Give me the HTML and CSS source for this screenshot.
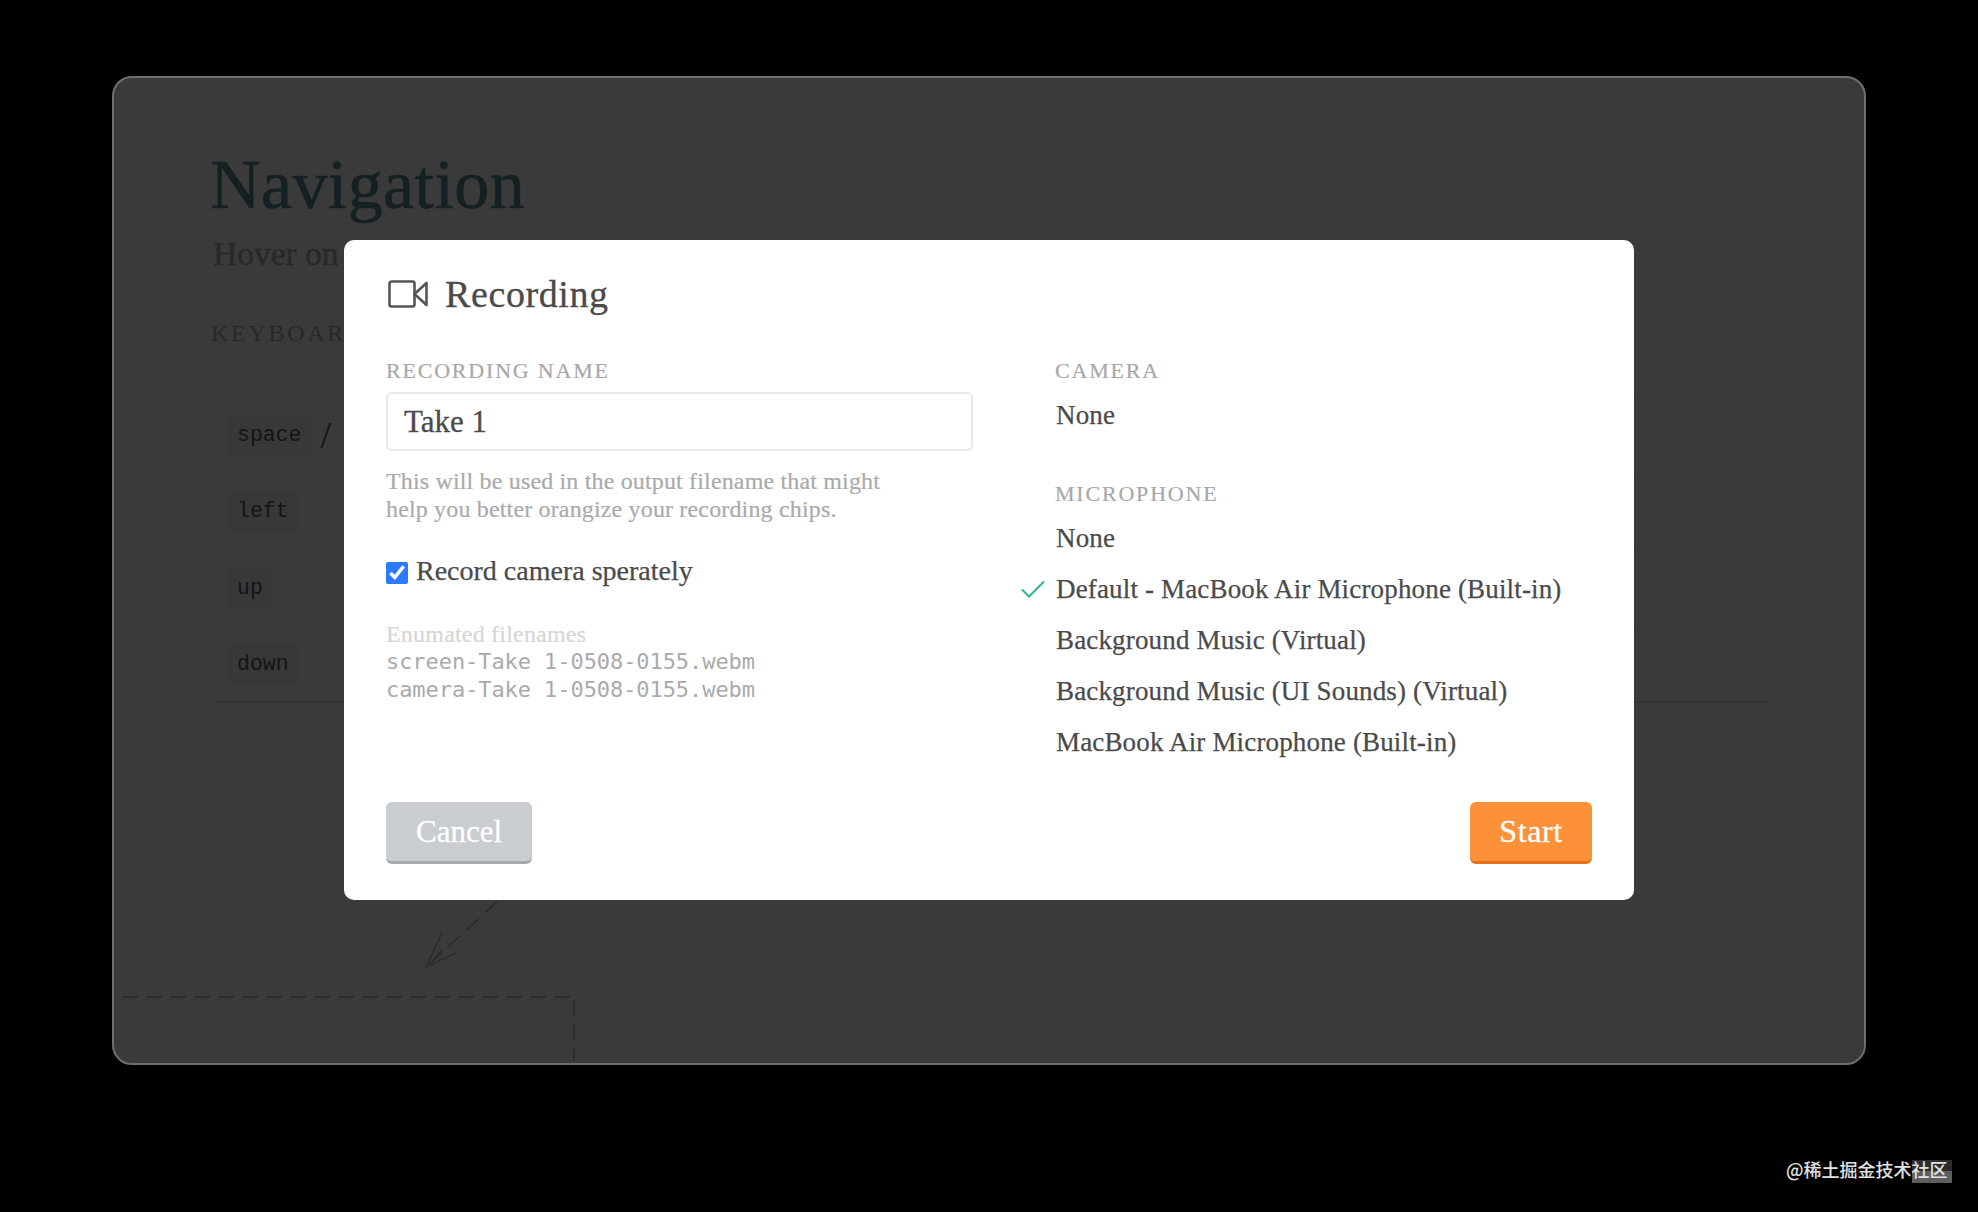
FILE: index.html
```html
<!DOCTYPE html>
<html lang="en">
<head>
<meta charset="utf-8">
<title>Recording</title>
<link rel="stylesheet" href="styles.css">
</head>
<body>
<main class="stage">
  <section class="slide">
    <h1 class="slide-title">Navigation</h1>
    <p class="slide-sub">Hover on the</p>
    <h2 class="slide-label">KEYBOARD SHORTCUTS</h2>
    <div class="shortcuts">
      <div class="shortcut"><kbd class="key">space</kbd><span class="slash">/</span></div>
      <div class="shortcut"><kbd class="key">left</kbd></div>
      <div class="shortcut"><kbd class="key">up</kbd></div>
      <div class="shortcut"><kbd class="key">down</kbd></div>
    </div>
    <svg class="sketch" width="1754" height="989" viewBox="0 0 1754 989" fill="none" aria-hidden="true">
      <path class="dash" d="M10 921H462V985"/>
      <path class="dash-arrow" d="M385 826L314 891"/>
      <path class="arrow-head" d="M330 857L314 891L344 877"/>
      <path class="arrow-head" d="M324 881L330 874"/>
    </svg>
    <div class="modal">
      <header class="modal-head">
        <svg class="cam-icon" width="40" height="28" viewBox="0 0 40 28" fill="none">
          <path d="M3.500 1.500H24.500A2 2 0 0 1 26.500 3.500V24.500A2 2 0 0 1 24.500 26.500H3.500A2 2 0 0 1 1.500 24.500V3.500A2 2 0 0 1 3.500 1.500Z"/>
          <path d="M26.500 14L38.500 3V25Z"/>
        </svg>
        <h2 class="modal-title">Recording</h2>
      </header>
      <div class="modal-cols">
        <div class="col-left">
          <div class="label">RECORDING NAME</div>
          <div class="name-input">Take 1</div>
          <p class="hint">This will be used in the output filename that might<br>help you better orangize your recording chips.</p>
          <label class="check-row"><input class="check" type="checkbox" checked><span>Record camera sperately</span></label>
          <div class="enum-title">Enumated filenames</div>
          <div class="enum-file">screen-Take 1-0508-0155.webm</div>
          <div class="enum-file">camera-Take 1-0508-0155.webm</div>
        </div>
        <div class="col-right">
          <div class="label">CAMERA</div>
          <ul class="options">
            <li class="option">None</li>
          </ul>
          <div class="label label-next">MICROPHONE</div>
          <ul class="options">
            <li class="option">None</li>
            <li class="option option-on">
              <svg class="tick" width="24" height="18" viewBox="0 0 24 18" fill="none"><path d="M1 9.500L8 16.500L23 1.500"/></svg>
              Default - MacBook Air Microphone (Built-in)
            </li>
            <li class="option">Background Music (Virtual)</li>
            <li class="option">Background Music (UI Sounds) (Virtual)</li>
            <li class="option">MacBook Air Microphone (Built-in)</li>
          </ul>
        </div>
      </div>
      <footer class="modal-foot">
        <button class="btn btn-cancel" type="button">Cancel</button>
        <button class="btn btn-start" type="button">Start</button>
      </footer>
    </div>
  </section>
  <div class="watermark"><span class="smudge"></span><span class="mark-text">@稀土掘金技术社区</span></div>
</main>
</body>
</html>
```
FILE: styles.css
```css
* { box-sizing: border-box; }
html, body { margin: 0; padding: 0; background: #000; }
body { font-family: "Liberation Serif", serif; }
.stage { position: relative; width: 1978px; height: 1212px; padding: 76px 0 0 112px; overflow: hidden; }

.slide { position: relative; width: 1754px; height: 989px; background: #3a3a3a; border: 2px solid #6e6e6e; border-radius: 20px; padding: 62px 98px 0 96px; }
.slide-title { margin: 0; font-size: 70px; line-height: 90px; font-weight: 400; letter-spacing: .4px; color: #142022; -webkit-text-stroke: .6px #142022; }
.slide-sub { margin: 2px 0 0 3px; font-size: 33.500px; line-height: 44px; color: #282828; -webkit-text-stroke: .3px #282828; }
.slide-label { margin: 42px 0 0 1px; font-size: 24px; line-height: 30px; font-weight: 400; letter-spacing: 2.700px; color: #282828; }
.shortcuts { margin-top: 48px; margin-left: 5px; }
.shortcut { height: 76.500px; display: flex; align-items: center; gap: 9px; border-top: 1px solid #373737; padding-left: 12px; }
.shortcut:last-child { border-bottom: 2px solid #333; height: 77px; }
.key { font-family: "Liberation Mono", monospace; font-size: 21.500px; color: #141414; background: #383838; padding: 8px 10px; border-radius: 4px; }
.slash { font-size: 38px; color: #141414; }
.sketch { position: absolute; left: -2px; top: -2px; }
.dash { stroke: #2a2a2a; stroke-width: 1.500; stroke-dasharray: 16 8; }
.dash-arrow { stroke: #2a2a2a; stroke-width: 1.500; stroke-dasharray: 16 9; }
.arrow-head { stroke: #2a2a2a; stroke-width: 1.200; }

.modal { position: absolute; left: 230px; top: 162px; width: 1290px; height: 660px; background: #fff; border-radius: 10px; padding: 29px 42px 36px; color: #4a4a4a; }
.modal-head { display: flex; align-items: center; gap: 17px; height: 50px; padding-left: 2px; }
.cam-icon { flex: none; }
.cam-icon path { stroke: #555; stroke-width: 2.600; stroke-linejoin: round; }
.modal-title { margin: 0; font-size: 38px; line-height: 50px; font-weight: 400; letter-spacing: .6px; color: #4a4a4a; -webkit-text-stroke: .3px #4a4a4a; }
.modal-cols { display: grid; grid-template-columns: 587px 1fr; column-gap: 82px; margin-top: 36px; height: 447px; }
.label { font-size: 22px; line-height: 32px; letter-spacing: 1.800px; color: #a8a8a8; -webkit-text-stroke: .2px #a8a8a8; }
.label-next { margin-top: 37px; }
.name-input { margin-top: 5px; height: 59px; border: 2px solid #e8e8e8; border-radius: 6px; padding-left: 16px; font-size: 31px; line-height: 55px; color: #4a4a4a; -webkit-text-stroke: .3px #4a4a4a; }
.hint { margin: 16px 0 0; font-size: 24px; line-height: 28px; letter-spacing: .16px; color: #aaa; -webkit-text-stroke: .2px #aaa; }
.check-row { display: flex; align-items: center; gap: 8px; margin-top: 33px; height: 30px; font-size: 28px; color: #4a4a4a; -webkit-text-stroke: .25px #4a4a4a; }
.check { width: 22px; height: 22px; margin: 3px 0 0; accent-color: #2b7bff; }
.enum-title { margin-top: 34px; font-size: 24px; line-height: 28px; letter-spacing: .2px; color: #d6d6d6; -webkit-text-stroke: .2px #d6d6d6; }
.enum-file { font-family: "DejaVu Sans Mono", monospace; font-size: 22px; line-height: 28px; letter-spacing: -.07px; color: #aaa; }
.options { list-style: none; margin: 3px 0 0; padding: 0; }
.option { position: relative; height: 51px; padding-left: 1px; font-size: 27px; line-height: 51px; letter-spacing: .16px; color: #4a4a4a; white-space: nowrap; -webkit-text-stroke: .25px #4a4a4a; }
.tick { position: absolute; left: -34px; top: 16px; }
.tick path { stroke: #2fb58c; stroke-width: 2; }
.modal-foot { display: flex; justify-content: space-between; }
.btn { height: 62px; border: 0; border-bottom: 3px solid; border-radius: 6px; font-family: inherit; font-size: 31px; color: #fff; padding: 0; -webkit-text-stroke: .3px #fff; }
.btn-cancel { width: 146px; background: #c9ccd1; border-bottom-color: #a6a9ae; }
.btn-start { width: 122px; background: #fc9139; border-bottom-color: #e4701b; font-size: 32px; letter-spacing: .6px; }

.watermark { position: absolute; left: 1786px; top: 1157px; }
.smudge { position: absolute; left: 126px; top: 3px; width: 40px; height: 23px; background: linear-gradient(#2c2c2c 0 50%, #5e5e5e 50%); }
.mark-text { position: relative; font-family: "Noto Sans CJK SC", sans-serif; font-size: 18px; font-weight: 500; line-height: 24px; color: #e2e2e2; white-space: nowrap; }
```
